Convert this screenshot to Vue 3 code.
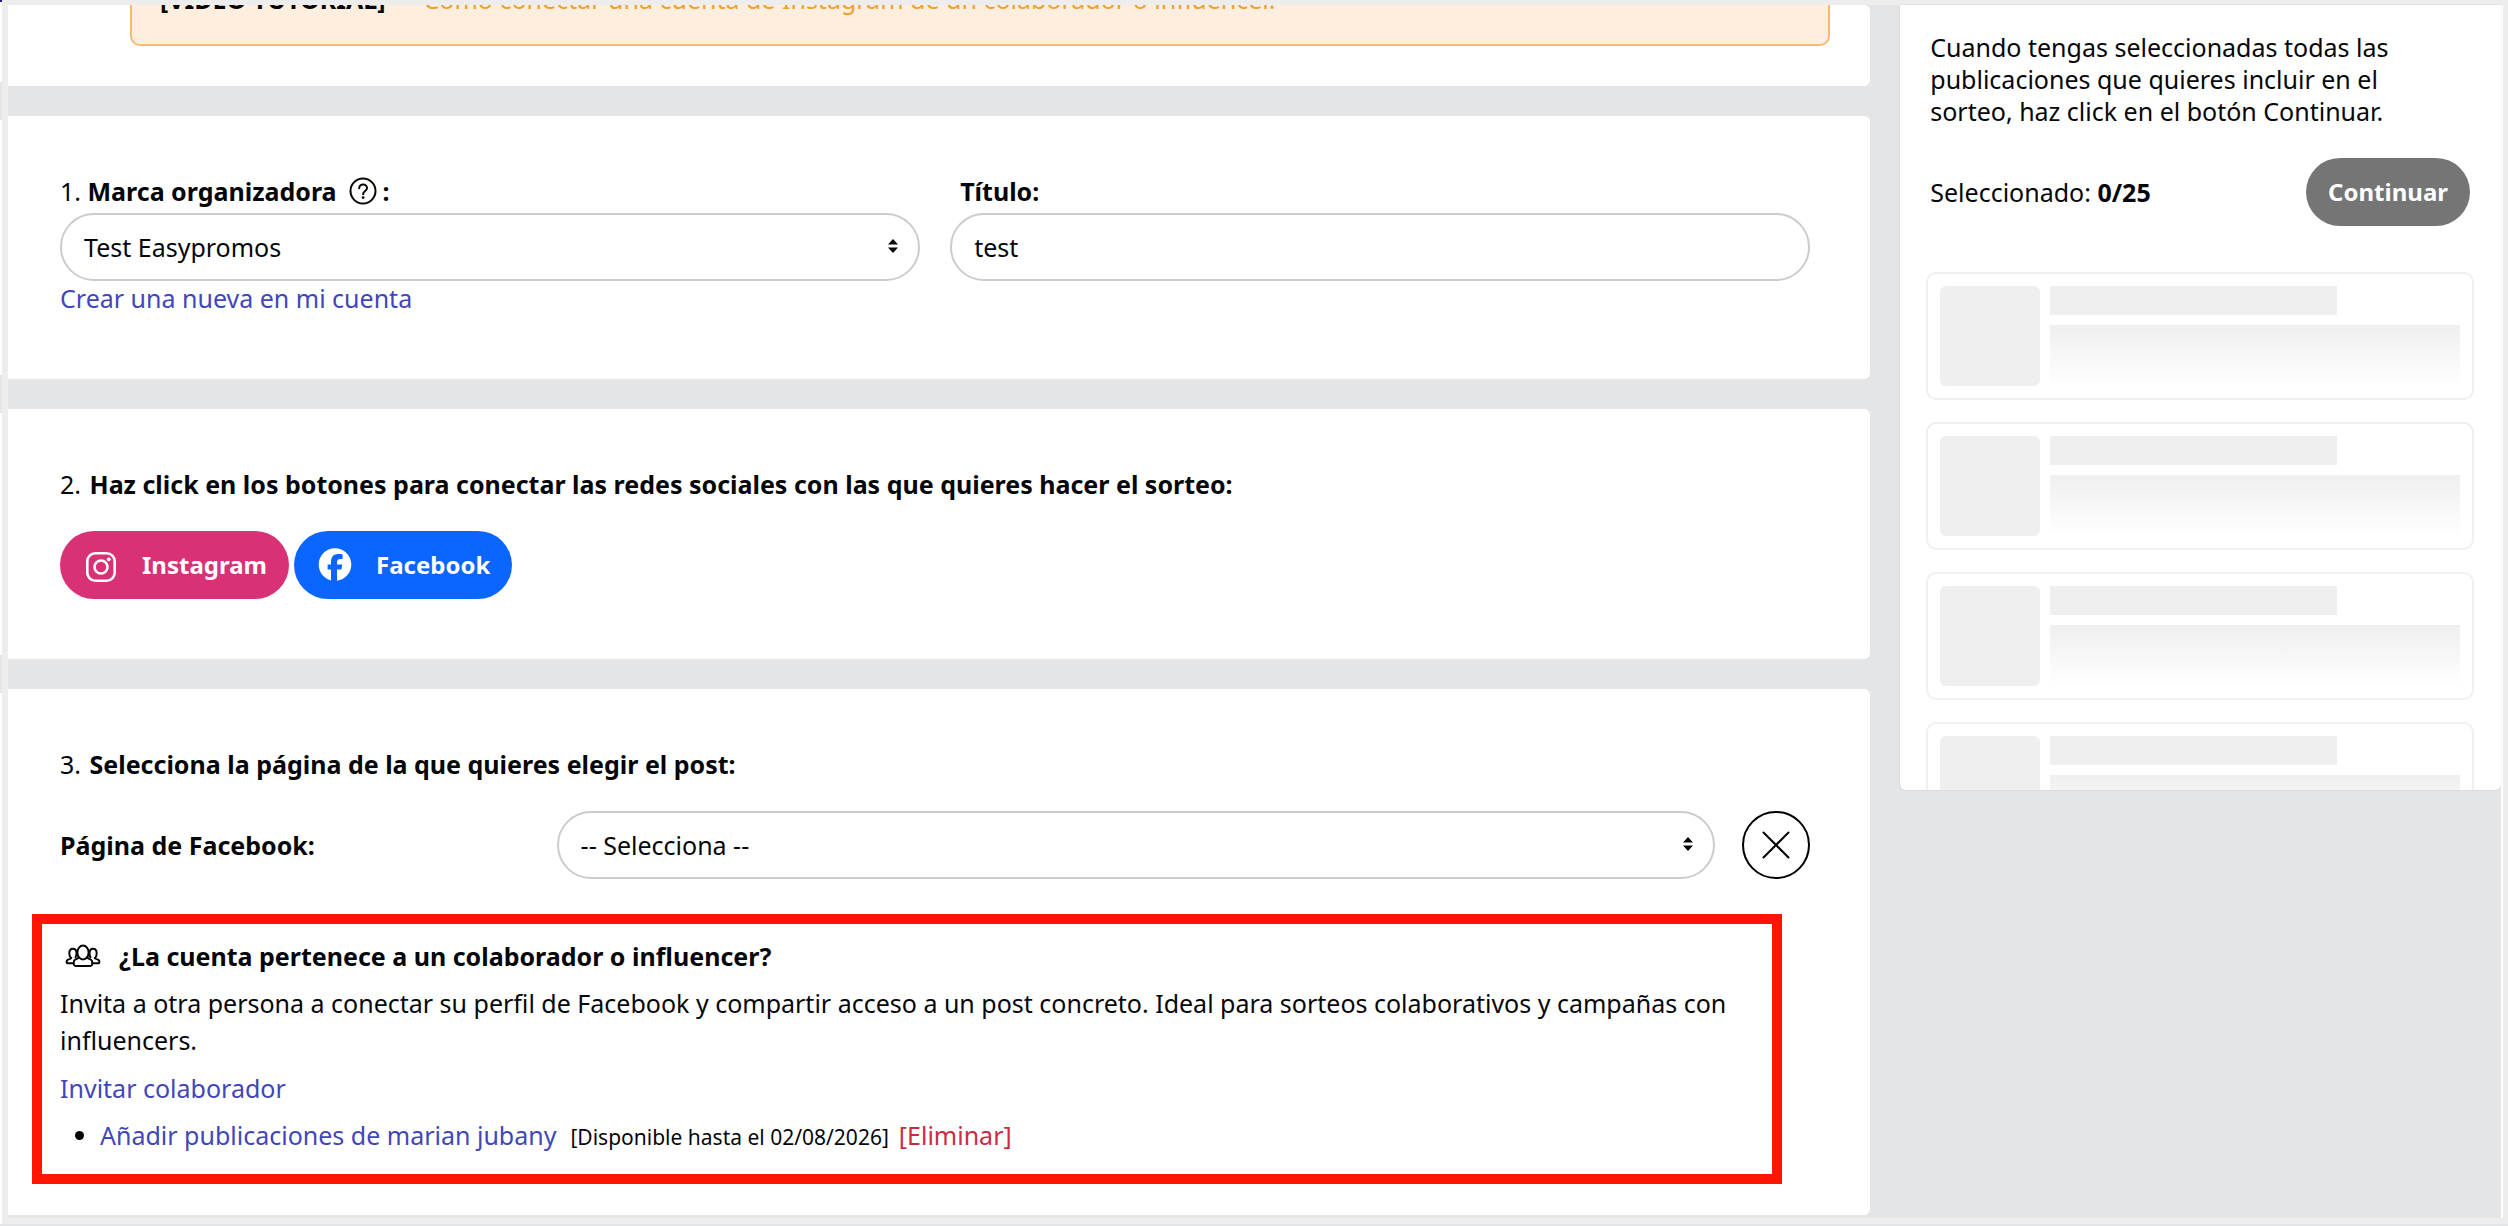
<script setup>
import { ref } from 'vue'

const brand = ref('Test Easypromos')
const title = ref('test')
const page = ref('')
const placeholders = 4
</script>

<template>
  <div class="window">
    <div class="frame">
      <main class="steps">
        <section class="card card-notice">
          <p class="notice">
            <strong>[VIDEO TUTORIAL]</strong>
            <a href="#">Cómo conectar una cuenta de Instagram de un colaborador o influencer.</a>
          </p>
        </section>

        <section class="card card-brand">
          <div class="field">
            <label class="label" for="brand">
              <span>1. <strong>Marca organizadora</strong></span>
              <svg class="help" viewBox="0 0 28 28" width="28" height="28" aria-hidden="true">
                <g fill="none" stroke="currentColor" stroke-width="2" stroke-linecap="round" stroke-linejoin="round">
                  <circle cx="14" cy="14" r="12.5" />
                  <path d="M10.2 11.2c0-2.200 1.700-3.800 3.900-3.800s3.900 1.500 3.900 3.600c0 1.700-1 2.500-2.100 3.300-1.200.9-1.800 1.500-1.800 2.900" />
                </g>
                <circle cx="14.100" cy="20.600" r="1.400" fill="currentColor" />
              </svg>
              <strong>:</strong>
            </label>
            <div class="picker">
              <select id="brand" v-model="brand" class="control">
                <option>Test Easypromos</option>
              </select>
              <svg class="arrows" viewBox="0 0 10 14" width="10" height="14" aria-hidden="true">
                <path d="M0 5.500 5 0l5 5.500zM0 8.500h10L5 14z" fill="currentColor" />
              </svg>
            </div>
            <a class="link create" href="#">Crear una nueva en mi cuenta</a>
          </div>
          <div class="field">
            <label class="label label-title" for="title"><strong>Título:</strong></label>
            <input id="title" v-model="title" class="control" type="text" />
          </div>
        </section>

        <section class="card card-networks">
          <h2 class="heading"><span>2.</span> Haz click en los botones para conectar las redes sociales con las que quieres hacer el sorteo:</h2>
          <div class="networks">
            <button class="btn instagram" type="button">
              <svg viewBox="0 0 34 34" width="34" height="34" aria-hidden="true">
                <g fill="none" stroke="currentColor" stroke-width="2.600">
                  <rect x="3.300" y="5.300" width="27.400" height="27.400" rx="8" />
                  <circle cx="17" cy="19" r="6.500" />
                </g>
                <circle cx="24.800" cy="11.300" r="1.900" fill="currentColor" />
              </svg>
              Instagram
            </button>
            <button class="btn facebook" type="button">
              <svg viewBox="0 0 34 34" width="34" height="34" aria-hidden="true">
                <path
                  fill="currentColor"
                  d="M33.300 16.500C33.300 7.500 26 .2 17 .2S.7 7.500.7 16.500c0 7.700 5.200 14.100 12.300 15.900V21.500H9.600v-5H13v-2.200c0-5.600 2.500-8.200 8-8.200 1 0 2.800.2 3.600.4v4.600c-.4 0-1.100-.1-1.900-.1-2.700 0-3.700 1-3.700 3.700v1.800h5.300l-.9 5H19v11.200c8.100-1 14.300-7.900 14.300-16.200z"
                />
              </svg>
              Facebook
            </button>
          </div>
        </section>

        <section class="card card-page">
          <h2 class="heading"><span>3.</span> Selecciona la página de la que quieres elegir el post:</h2>
          <div class="page-row">
            <label for="page"><strong>Página de Facebook:</strong></label>
            <div class="picker">
              <select id="page" v-model="page" class="control">
                <option value="">-- Selecciona --</option>
              </select>
              <svg class="arrows" viewBox="0 0 10 14" width="10" height="14" aria-hidden="true">
                <path d="M0 5.500 5 0l5 5.500zM0 8.500h10L5 14z" fill="currentColor" />
              </svg>
            </div>
            <button class="remove" type="button" aria-label="Quitar página">
              <svg viewBox="0 0 28 28" width="28" height="28" aria-hidden="true">
                <path d="m1.500 1.500 25 25m0-25-25 25" fill="none" stroke="currentColor" stroke-width="2" stroke-linecap="round" />
              </svg>
            </button>
          </div>

          <div class="collab">
            <h3 class="collab-title">
              <svg viewBox="0 0 36 24" width="36" height="24" aria-hidden="true">
                <g fill="none" stroke="currentColor" stroke-width="2" stroke-linejoin="round" stroke-linecap="round">
                  <ellipse cx="18" cy="8.500" rx="5.600" ry="7" />
                  <path d="M13.500 13.500c-.3 1.500-3.800 1.300-4.500 3.500-.4 1.300-.4 3 0 4 .3.800 1 1 2 1h14c1 0 1.700-.2 2-1 .4-1 .4-2.700 0-4-.7-2.200-4.200-2-4.500-3.500" />
                  <path d="M10.500 13.200c.6-1 1-2.200 1-3.700 0-2.900-1.500-4.700-3.600-4.700S4.300 6.600 4.300 9.500c0 2 .8 3.800 2 4.500-.5 1.300-3.500.9-4.300 2.500-.4.8-.5 1.600-.3 2.200.1.500.5.600 1.100.6h5.700" />
                  <path d="M25.500 13.200c-.6-1-1-2.200-1-3.700 0-2.900 1.500-4.700 3.600-4.700s3.600 1.800 3.600 4.700c0 2-.8 3.800-2 4.500.5 1.300 3.500.9 4.300 2.500.4.800.5 1.600.3 2.200-.1.500-.5.600-1.100.6h-5.700" />
                </g>
              </svg>
              ¿La cuenta pertenece a un colaborador o influencer?
            </h3>
            <p class="collab-text">
              Invita a otra persona a conectar su perfil de Facebook y compartir acceso a un post concreto. Ideal para
              sorteos colaborativos y campañas con influencers.
            </p>
            <a class="link" href="#">Invitar colaborador</a>
            <ul class="invites">
              <li>
                <a class="link" href="#">Añadir publicaciones de marian jubany</a>
                <small>[Disponible hasta el 02/08/2026]</small>
                <a class="link danger" href="#">[Eliminar]</a>
              </li>
            </ul>
          </div>
        </section>
      </main>

      <aside class="summary">
        <p class="summary-text">
          Cuando tengas seleccionadas todas las publicaciones que quieres incluir en el sorteo, haz click en el botón
          Continuar.
        </p>
        <div class="summary-row">
          <span>Seleccionado: <strong>0/25</strong></span>
          <button class="continue" type="button">Continuar</button>
        </div>
        <div class="skeletons">
          <div v-for="n in placeholders" :key="n" class="skeleton">
            <div class="thumb"></div>
            <div class="lines">
              <div class="bar"></div>
              <div class="fade"></div>
            </div>
          </div>
        </div>
      </aside>
    </div>
  </div>
</template>

<style>
body {
  margin: 0;
  background: #e4e5e7;
}
</style>

<style scoped>
* {
  box-sizing: border-box;
}
.window {
  padding: 0 0 2px 2px;
  font: 25px/36px "Noto Sans", sans-serif;
  color: #05060a;
  background:
    linear-gradient(#1d1496, #1d1496) 0 0 / 2px 2px no-repeat,
    linear-gradient(#e4e5e7, #e4e5e7) 0 100% / 100% 2px no-repeat,
    linear-gradient(#e4e5e7, #e4e5e7) 0 82px / 2px 38px no-repeat,
    linear-gradient(#e4e5e7, #e4e5e7) 0 375px / 2px 38px no-repeat,
    linear-gradient(#e4e5e7, #e4e5e7) 0 655px / 2px 38px no-repeat,
    #fff;
}
.frame {
  display: grid;
  grid-template-columns: minmax(0, 31fr) minmax(0, 10fr);
  column-gap: 30px;
  align-items: start;
  padding: 0 2px 3px 0;
  border: solid #ededed;
  border-width: 5px 5px 6px 6px;
  background: #e4e5e7;
  box-shadow: inset -2px 0 #fff;
}
strong {
  font-weight: 700;
}
.steps {
  display: flex;
  flex-direction: column;
  gap: 30px;
}
.card {
  padding: 57px 60px 60px 52px;
  border-radius: 0 6px 6px 0;
  background: #fff;
}

/* Notice */
.card-notice {
  padding: 0 40px 40px 122px;
  overflow: hidden;
}
.notice {
  display: flex;
  gap: 38px;
  margin: -34px 0 0;
  padding: 8px 28px 27px;
  border: 2px solid #f5bb75;
  border-radius: 10px;
  background: #feeedd;
}
.notice a {
  color: #f0a030;
  text-decoration: none;
}

/* Brand and title */
.card-brand {
  display: grid;
  grid-template-columns: 1fr 1fr;
  gap: 30px;
  padding-bottom: 64px;
}
.field {
  display: flex;
  flex-direction: column;
}
.label {
  display: flex;
  align-items: center;
  gap: 6px;
  height: 36px;
  margin-bottom: 4px;
}
.label-title {
  padding-left: 10px;
}
.help {
  margin-left: 6px;
}
.control {
  display: block;
  width: 100%;
  height: 68px;
  padding: 0 22px;
  border: 2px solid #ccc;
  border-radius: 34px;
  background: #fff;
  color: inherit;
  font: inherit;
  appearance: none;
}
.picker {
  position: relative;
}
.arrows {
  position: absolute;
  top: 26px;
  right: 22px;
  pointer-events: none;
}
.link {
  color: #3f47ba;
  text-decoration: none;
}
.create {
  align-self: flex-start;
  line-height: 34px;
}

/* Networks */
.heading {
  margin: 0 0 29px;
  font-size: 25px;
  font-weight: 700;
}
.heading span {
  margin-right: 2px;
  font-weight: 400;
}
.networks {
  display: flex;
  gap: 5px;
}
.btn,
.continue {
  display: flex;
  align-items: center;
  gap: 24px;
  height: 68px;
  padding: 0 22px 0 24px;
  border: 0;
  border-radius: 34px;
  color: #fff;
  font: 700 24px/36px "Noto Sans", sans-serif;
}
.instagram {
  background: #d93175;
}
.facebook {
  background: #0b66ff;
}

/* Facebook page */
.card-page {
  padding-bottom: 31px;
}
.page-row {
  display: grid;
  grid-template-columns: 3fr 7fr auto;
  align-items: center;
}
.remove {
  display: grid;
  place-items: center;
  width: 68px;
  height: 68px;
  margin-left: 27px;
  padding: 0;
  border: 2px solid #000;
  border-radius: 50%;
  background: #fff;
  color: #000;
}
.collab {
  margin: 35px 28px 0 -28px;
  padding: 14px 18px 21px;
  border: 10px solid #ff1500;
}
.collab-title {
  display: flex;
  align-items: center;
  gap: 18px;
  margin: 0;
  padding-left: 5px;
  font-size: 25px;
  font-weight: 700;
}
.collab-text {
  margin: 11px 0;
  line-height: 37px;
}
.invites {
  margin: 11px 0 0;
  padding-left: 40px;
}
.invites small {
  margin: 0 10px 0 14px;
  font-size: 21px;
  line-height: 24px;
}
.danger {
  color: #cb2c42;
}

/* Summary */
.summary {
  max-height: 64vh;
  padding: 26px 27px 0 26px;
  border-radius: 0 0 6px 6px;
  background: #fff;
  box-shadow: 0 0 2px #0002;
  overflow: hidden;
}
.summary-text {
  margin: 0 50px 31px 4px;
  line-height: 32px;
}
.summary-row {
  display: flex;
  align-items: center;
  justify-content: space-between;
  margin: 0 4px 46px;
}
.continue {
  padding: 0 22px;
  background: #757575;
}
.skeletons {
  display: flex;
  flex-direction: column;
  gap: 22px;
}
.skeleton {
  display: flex;
  flex: none;
  gap: 10px;
  padding: 12px;
  border: 2px solid #f0f0f0;
  border-radius: 10px;
}
.thumb {
  flex: none;
  width: 100px;
  height: 100px;
  border-radius: 6px;
  background: #efefef;
}
.lines {
  flex: 1;
}
.bar {
  width: 70%;
  height: 29px;
  margin-bottom: 10px;
  background: #efefef;
}
.fade {
  height: 61px;
  background: linear-gradient(#efeff0, #fff);
}
</style>
